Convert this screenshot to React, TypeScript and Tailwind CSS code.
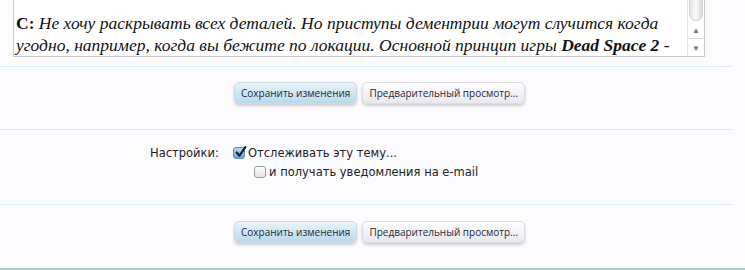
import React from "react";

function Button({ children, primary }: { children: React.ReactNode; primary?: boolean }) {
  return (
    <button
      className={
        primary
          ? "h-[22px] px-[6px] rounded-[5px] border border-[#c9dbe5] bg-gradient-to-b from-[#e9f3f9] to-[#b9d9ec] text-[10px] leading-[20px] text-[#1c2a36] shadow-[0_2px_3px_rgba(0,0,0,0.18)]"
          : "h-[22px] px-[6px] rounded-[5px] border border-[#dcdce2] bg-gradient-to-b from-[#ffffff] to-[#e8e8ee] text-[10px] leading-[20px] text-[#1c2a36] shadow-[0_2px_3px_rgba(0,0,0,0.18)]"
      }
      style={{ fontFamily: '"Open Sans", "DejaVu Sans", sans-serif' }}
    >
      {children}
    </button>
  );
}

function ButtonRow() {
  return (
    <div className="flex justify-center gap-[5px] pl-[14px]">
      <Button primary>Сохранить изменения</Button>
      <Button>Предварительный просмотр...</Button>
    </div>
  );
}

function Checkbox({ checked }: { checked?: boolean }) {
  return (
    <span
      className={
        checked
          ? "relative inline-flex shrink-0 w-[12px] h-[12px] rounded-[3px] border border-[#5b8bb8] bg-gradient-to-b from-[#bcd7f0] to-[#6ea4d8]"
          : "relative inline-flex shrink-0 w-[12px] h-[12px] rounded-[3px] border border-[#9a9a9a] bg-gradient-to-b from-[#ffffff] to-[#e4e4e4]"
      }
    >
      {checked && (
        <svg viewBox="0 0 12 12" className="absolute left-[0px] top-[-2px] w-[13px] h-[13px]">
          <path d="M2.5 6 L5 9 L10.5 1" fill="none" stroke="#16212d" strokeWidth="2" strokeLinecap="round" strokeLinejoin="round" />
        </svg>
      )}
    </span>
  );
}

export default function App() {
  return (
    <div className="w-[745px] h-[270px] overflow-hidden bg-[#fbfbfd] border-b-[2px] border-[#a6cac9]">
      <div className="pl-[13px] pr-[40px] -mt-[20px]">
        <div className="flex h-[77px] overflow-hidden border border-[#c9c9c9] bg-white">
          <div
            className="flex-1 min-w-0 overflow-hidden pl-[2px] pt-[31px] text-[17.5px] leading-[22px] text-[#111] italic whitespace-nowrap"
            style={{ fontFamily: '"Liberation Serif", Georgia, serif' }}
          >
            <b className="not-italic">C:</b> Не хочу раскрывать всех деталей. Но приступы дементрии могут случится когда
            <br />
            угодно, например, когда вы бежите по локации. Основной принцип игры <b>Dead Space 2</b> -
          </div>
          <div className="w-[17px] shrink-0 flex flex-col border-l border-[#e2e2e2] bg-white">
            <div className="h-[40px] mx-[1px] rounded-b-[8px] bg-gradient-to-r from-[#e4e4e4] via-[#fafafa] to-[#d8d8d8] border border-[#cfcfcf]" />
            <div className="flex-1 flex items-center justify-center text-[8px] text-[#777]">▲</div>
            <div className="h-px bg-[#dcdcdc]" />
            <div className="flex-1 flex items-center justify-center text-[8px] text-[#777]">▼</div>
          </div>
        </div>
      </div>

      <div className="mt-[9px] mr-[12px] h-px bg-[#dcecef]" />

      <div className="pt-[15px] pb-[25px]">
        <ButtonRow />
      </div>

      <div className="mr-[12px] h-px bg-[#dcecef]" />

      <div
        className="pt-[15px] pb-[24px] text-[11.5px] text-[#222]"
        style={{ fontFamily: '"DejaVu Sans", Verdana, sans-serif' }}
      >
        <div className="flex">
          <div className="w-[229px] pl-[150px] leading-[16px]">Настройки:</div>
          <div className="flex flex-col gap-[3px]">
            <label className="flex items-center gap-[3px] pl-[4px] leading-[16px]">
              <Checkbox checked />
              <span>Отслеживать эту тему...</span>
            </label>
            <label className="flex items-center gap-[3px] pl-[25px] leading-[16px]">
              <Checkbox />
              <span>и получать уведомления на e-mail</span>
            </label>
          </div>
        </div>
      </div>

      <div className="mr-[12px] h-px bg-[#dcecef]" />

      <div className="pt-[16px]">
        <ButtonRow />
      </div>
    </div>
  );
}
